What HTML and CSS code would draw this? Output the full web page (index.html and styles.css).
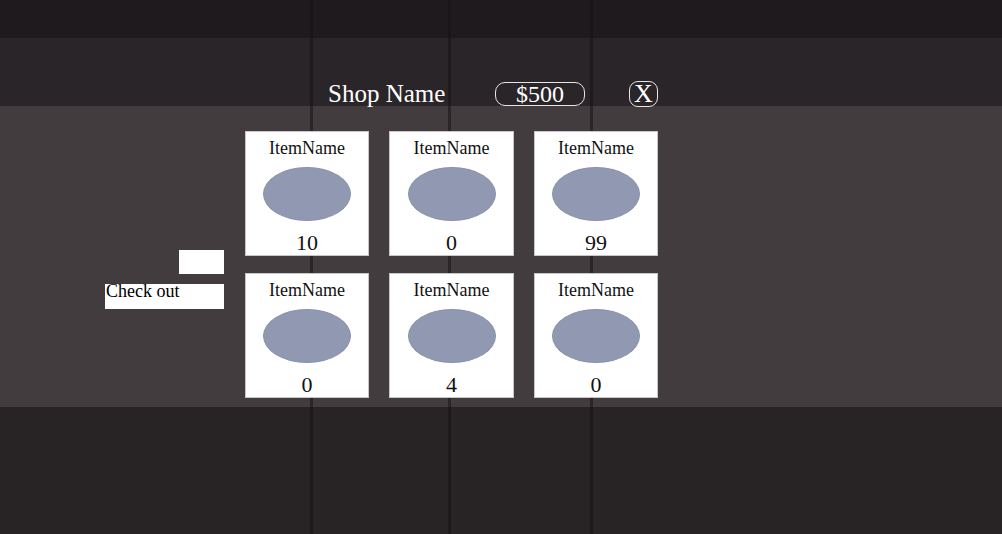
FILE: index.html
```html
<!DOCTYPE html>
<html lang="en">
<head>
    <meta charset="UTF-8">
    <meta name="viewport" content="width=device-width, initial-scale=1.0">
    <title>Shop</title>
    <link rel="stylesheet" href="styles.css">
</head>
<body>
    <div class="scene">
        <div class="band band-top"></div>
        <div class="band band-upper"></div>
        <div class="band band-mid"></div>
        <div class="band band-low"></div>
        <div class="post post-1"></div>
        <div class="post post-2"></div>
        <div class="post post-3"></div>
    </div>

    <div class="shop">
        <div class="shop-header">
            <div class="shop-name">Shop Name</div>
            <div class="money">$500</div>
            <button class="close">X</button>
        </div>
        <div class="shop-body">
            <div class="side">
                <div class="qty-box"></div>
                <button class="checkout">Check out</button>
            </div>
            <div class="items">
                <div class="item">
                    <div class="item-name">ItemName</div>
                    <div class="item-pic"></div>
                    <div class="item-count">10</div>
                </div>
                <div class="item">
                    <div class="item-name">ItemName</div>
                    <div class="item-pic"></div>
                    <div class="item-count">0</div>
                </div>
                <div class="item">
                    <div class="item-name">ItemName</div>
                    <div class="item-pic"></div>
                    <div class="item-count">99</div>
                </div>
                <div class="item">
                    <div class="item-name">ItemName</div>
                    <div class="item-pic"></div>
                    <div class="item-count">0</div>
                </div>
                <div class="item">
                    <div class="item-name">ItemName</div>
                    <div class="item-pic"></div>
                    <div class="item-count">4</div>
                </div>
                <div class="item">
                    <div class="item-name">ItemName</div>
                    <div class="item-pic"></div>
                    <div class="item-count">0</div>
                </div>
            </div>
        </div>
    </div>
</body>
</html>
```

FILE: styles.css
```css
body {
    margin: 0;
    padding: 0;
    width: 1002px;
    height: 534px;
    overflow: hidden;
    position: relative;
    font-family: "Liberation Serif", "Times New Roman", serif;
    background-color: #282325;
}
.scene {
    position: absolute;
    top: 0;
    left: 0;
    width: 100%;
    height: 100%;
}
.band-top {
    height: 38px;
    background-color: #1e1a1e;
}
.band-upper {
    height: 68px;
    background-color: #2a2528;
}
.band-mid {
    height: 301px;
    background-color: #423c3f;
}
.band-low {
    height: 127px;
    background-color: #282325;
}
.post {
    position: absolute;
    top: 0;
    width: 3px;
    height: 100%;
    background-color: rgba(22, 18, 21, 0.55);
}
.post-1 {
    left: 310px;
}
.post-2 {
    left: 448px;
}
.post-3 {
    left: 590px;
}
.shop {
    position: relative;
    padding: 81px 0 0 105px;
}
.shop-header {
    display: flex;
    align-items: center;
    height: 25px;
    margin-left: 223px;
    color: #fff;
}
.shop-name {
    font-size: 25px;
    line-height: 25px;
    width: 167px;
}
.money {
    width: 88px;
    height: 22px;
    border: 1.5px solid #e6e6e6;
    border-radius: 10px;
    font-size: 24px;
    line-height: 22px;
    text-align: center;
    margin-right: 44px;
}
.close {
    width: 29px;
    height: 26px;
    padding: 0;
    border: 1.5px solid #e6e6e6;
    border-radius: 9px;
    background: none;
    color: #fff;
    font-family: inherit;
    font-size: 26px;
    line-height: 22px;
}
.shop-body {
    display: flex;
    gap: 21px;
    margin-top: 25px;
}
.side {
    width: 119px;
    display: flex;
    flex-direction: column;
    align-items: flex-end;
    gap: 10px;
    padding-top: 119px;
}
.qty-box {
    width: 45px;
    height: 24px;
    background-color: #fff;
}
.checkout {
    width: 119px;
    height: 25px;
    padding: 0 0 0 1px;
    border: none;
    background-color: #fff;
    color: #000;
    font-family: inherit;
    font-size: 18px;
    line-height: 15px;
    text-align: left;
    align-self: stretch;
    display: flex;
    align-items: flex-start;
}
.items {
    display: grid;
    grid-template-columns: 124px 125px 124px;
    column-gap: 20px;
    row-gap: 17px;
}
.item {
    box-sizing: border-box;
    height: 125px;
    background-color: #fff;
    border: 1px solid #c8c6c8;
    display: flex;
    flex-direction: column;
    align-items: center;
}
.item-name {
    font-size: 18px;
    line-height: 20px;
    margin-top: 6px;
    color: #111;
}
.item-pic {
    box-sizing: border-box;
    width: 88px;
    height: 54px;
    margin-top: 9px;
    border-radius: 50%;
    background-color: #9198b2;
    border: 1px solid #8a91ad;
}
.item-count {
    font-size: 22px;
    line-height: 24px;
    margin-top: 10px;
    color: #111;
}
```
